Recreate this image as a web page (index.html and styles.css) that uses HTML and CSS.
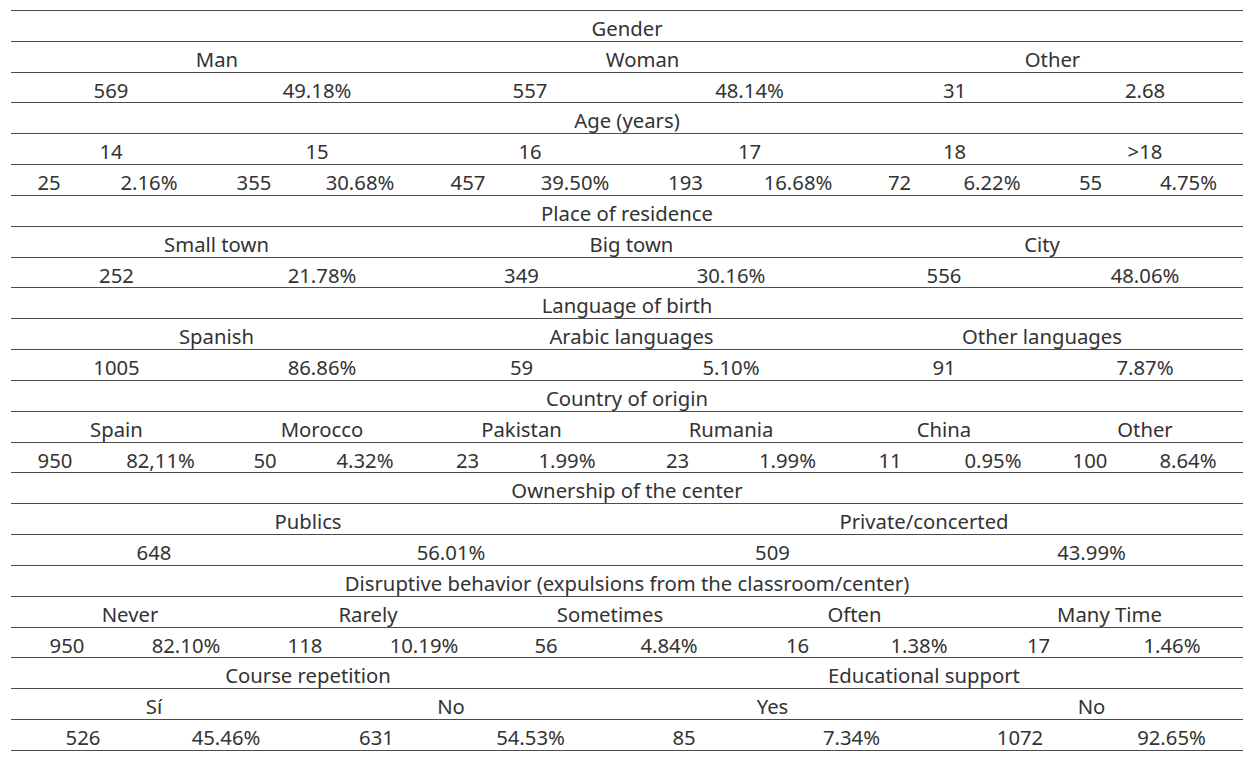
FILE: index.html
```html
<!DOCTYPE html>
<html lang="en">
<head>
<meta charset="utf-8">
<title>Sample characteristics</title>
<link rel="stylesheet" href="styles.css">
</head>
<body>
<div class="sheet">
  <div class="sec sec-age12">
    <div class="c full">Gender</div>
    <div class="c s4">Man</div><div class="c s4">Woman</div><div class="c s4">Other</div>
    <div class="c s2">569</div><div class="c s2">49.18%</div><div class="c s2">557</div><div class="c s2">48.14%</div><div class="c s2">31</div><div class="c s2">2.68</div>
    <div class="c full">Age (years)</div>
    <div class="c s2">14</div><div class="c s2">15</div><div class="c s2">16</div><div class="c s2">17</div><div class="c s2">18</div><div class="c s2">&gt;18</div>
    <div class="c">25</div><div class="c">2.16%</div><div class="c">355</div><div class="c">30.68%</div><div class="c">457</div><div class="c">39.50%</div><div class="c">193</div><div class="c">16.68%</div><div class="c">72</div><div class="c">6.22%</div><div class="c">55</div><div class="c">4.75%</div>
  </div>
  <div class="sec sec-place">
    <div class="c full">Place of residence</div>
    <div class="c s2">Small town</div><div class="c s2">Big town</div><div class="c s2">City</div>
    <div class="c">252</div><div class="c">21.78%</div><div class="c">349</div><div class="c">30.16%</div><div class="c">556</div><div class="c">48.06%</div>
    <div class="c full">Language of birth</div>
    <div class="c s2">Spanish</div><div class="c s2">Arabic languages</div><div class="c s2">Other languages</div>
    <div class="c">1005</div><div class="c">86.86%</div><div class="c">59</div><div class="c">5.10%</div><div class="c">91</div><div class="c">7.87%</div>
  </div>
  <div class="sec sec-country">
    <div class="c full">Country of origin</div>
    <div class="c s2">Spain</div><div class="c s2">Morocco</div><div class="c s2">Pakistan</div><div class="c s2">Rumania</div><div class="c s2">China</div><div class="c s2">Other</div>
    <div class="c">950</div><div class="c">82,11%</div><div class="c">50</div><div class="c">4.32%</div><div class="c">23</div><div class="c">1.99%</div><div class="c">23</div><div class="c">1.99%</div><div class="c">11</div><div class="c">0.95%</div><div class="c">100</div><div class="c">8.64%</div>
  </div>
  <div class="sec sec-own">
    <div class="c full">Ownership of the center</div>
    <div class="c s2">Publics</div><div class="c s2">Private/concerted</div>
    <div class="c">648</div><div class="c">56.01%</div><div class="c">509</div><div class="c">43.99%</div>
  </div>
  <div class="sec sec-disr">
    <div class="c full">Disruptive behavior (expulsions from the classroom/center)</div>
    <div class="c s2">Never</div><div class="c s2">Rarely</div><div class="c s2">Sometimes</div><div class="c s2">Often</div><div class="c s2">Many Time</div>
    <div class="c">950</div><div class="c">82.10%</div><div class="c">118</div><div class="c">10.19%</div><div class="c">56</div><div class="c">4.84%</div><div class="c">16</div><div class="c">1.38%</div><div class="c">17</div><div class="c">1.46%</div>
  </div>
  <div class="sec sec-course">
    <div class="c s4">Course repetition</div><div class="c s4">Educational support</div>
    <div class="c s2">Sí</div><div class="c s2">No</div><div class="c s2">Yes</div><div class="c s2">No</div>
    <div class="c">526</div><div class="c">45.46%</div><div class="c">631</div><div class="c">54.53%</div><div class="c">85</div><div class="c">7.34%</div><div class="c">1072</div><div class="c">92.65%</div>
  </div>
</div>
</body>
</html>
```

FILE: styles.css
```css
html, body {
  margin: 0;
  padding: 0;
  background: #ffffff;
}

.sheet {
  width: 1232px;
  margin: 10px 0 0 11px;
  border-top: 1px solid #4a4a4a;
  font-family: "Noto Sans", "Open Sans", sans-serif;
  font-size: 20.3px;
  color: #333333;
}

.sec {
  display: grid;
  grid-auto-rows: 30.83px;
}

.c {
  box-sizing: border-box;
  border-bottom: 1px solid #4a4a4a;
  text-align: center;
  white-space: nowrap;
  line-height: 24.83px;
  padding-top: 5px;
}

.full { grid-column: 1 / -1; }
.s2 { grid-column: span 2; }
.s4 { grid-column: span 4; }

.sec-age12 {
  grid-template-columns: 76px 124px 86px 126px 90px 124px 97px 128px 75px 110px 87px 109px;
}

.sec-place {
  grid-template-columns: 211px 200px 199px 220px 206px 196px;
}

.sec-country {
  grid-template-columns: 88px 123px 86px 114px 91px 108px 113px 107px 98px 108px 86px 110px;
}

.sec-own {
  grid-template-columns: 286px 308px 335px 303px;
}

.sec-disr {
  grid-template-columns: 112px 126px 112px 126px 118px 128px 129px 114px 125px 142px;
}

.sec-course {
  grid-template-columns: 144px 142px 159px 149px 158px 177px 160px 143px;
}
```
